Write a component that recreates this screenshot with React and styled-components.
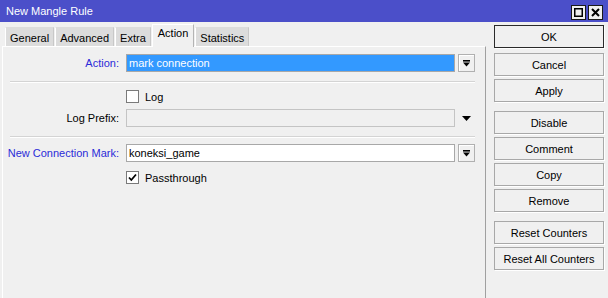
import styled, { createGlobalStyle } from 'styled-components';

const GlobalStyle = createGlobalStyle`
  html, body {
    margin: 0;
    padding: 0;
    background: #f0f0f0;
  }
  * {
    box-sizing: border-box;
  }
`;

const Window = styled.div`
  width: 608px;
  height: 298px;
  display: flex;
  flex-direction: column;
  background: #f0f0f0;
  font-family: 'Liberation Sans', Arial, sans-serif;
  font-size: 11px;
  color: #000;
  overflow: hidden;
`;

const TitleBar = styled.div`
  height: 22px;
  flex-shrink: 0;
  display: flex;
  align-items: center;
  justify-content: space-between;
  padding: 0 5px 0 6px;
  background: #4b4fc9;
  color: #fff;
  font-size: 11px;
`;

const TitleButtons = styled.div`
  display: flex;
  gap: 2px;
  margin-top: 2px;
`;

const TitleButton = styled.div`
  width: 15px;
  height: 15px;
  background: #f0f0f0;
  border: 1px solid #1a1a1a;
  display: flex;
  align-items: center;
  justify-content: center;
`;

const Body = styled.div`
  flex: 1;
  display: flex;
`;

const LeftSide = styled.div`
  width: 486px;
  display: flex;
  flex-direction: column;
  padding-left: 2px;
`;

const TabStrip = styled.div`
  height: 24px;
  display: flex;
  align-items: flex-end;
  padding-left: 3px;
`;

const Tab = styled.div`
  height: ${({ active }) => (active ? '23px' : '19px')};
  margin-bottom: ${({ active }) => (active ? '-1px' : '0')};
  padding: ${({ active }) => (active ? '2px 5px 0' : '1px 4px 0')};
  display: flex;
  align-items: ${({ active }) => (active ? 'flex-start' : 'center')};
  background: ${({ active }) => (active ? '#f0f0f0' : '#dcdcdc')};
  border-top: 1px solid ${({ active }) => (active ? '#ffffff' : '#dcdcdc')};
  border-left: 1px solid #ffffff;
  border-right: 1px solid ${({ active }) => (active ? '#b4b4b4' : '#c8c8c8')};
  margin-right: 1px;
  position: relative;
  z-index: ${({ active }) => (active ? 1 : 0)};
`;

const Panel = styled.div`
  flex: 1;
  border-top: 1px solid #ffffff;
  border-left: 1px solid #ffffff;
  border-right: 1px solid #a0a0a0;
  padding: 7px 10px 0 0;
  display: flex;
  flex-direction: column;
`;

const Row = styled.div`
  display: flex;
  align-items: center;
  height: ${({ h }) => h || 18}px;
  margin-top: ${({ mt }) => mt || 0}px;
`;

const Label = styled.div`
  width: 116px;
  flex-shrink: 0;
  text-align: right;
  margin-right: 7px;
  color: ${({ accent }) => (accent ? '#2b2bd8' : '#000')};
`;

const Field = styled.div`
  width: 329px;
  height: 18px;
  display: flex;
  align-items: center;
  padding-left: 2px;
  border: 1px solid ${({ disabled }) => (disabled ? '#c4c4c4' : '#a8a8a8')};
  background: ${({ selected, disabled }) =>
    selected ? '#3399ff' : disabled ? '#f0f0f0' : '#ffffff'};
  color: ${({ selected }) => (selected ? '#fff' : '#000')};
`;

const DropButton = styled.div`
  width: 17px;
  height: 18px;
  margin-left: 3px;
  border: 1px solid #b0b0b0;
  background: #f0f0f0;
  box-shadow: inset 1px 1px 0 #fff;
  display: flex;
  align-items: center;
  justify-content: center;
`;

const PlainArrow = styled.div`
  width: 17px;
  margin-left: 3px;
  display: flex;
  justify-content: center;
`;

const Separator = styled.div`
  height: 2px;
  margin: ${({ mt }) => mt}px 0 0 7px;
  border-top: 1px solid #d4d4d4;
  border-bottom: 1px solid #ffffff;
`;

const CheckRow = styled.label`
  display: flex;
  align-items: center;
  height: 13px;
  margin-left: 123px;
  margin-top: ${({ mt }) => mt}px;
  gap: 6px;
`;

const Box = styled.div`
  width: 13px;
  height: 13px;
  background: #fff;
  border: 1px solid #7a7a7a;
  display: flex;
  align-items: center;
  justify-content: center;
`;

const RightSide = styled.div`
  width: 110px;
  margin-left: 8px;
  padding-top: 3px;
  display: flex;
  flex-direction: column;
`;

const Button = styled.div`
  height: 23px;
  display: flex;
  align-items: center;
  justify-content: center;
  margin-top: ${({ mt }) => mt ?? 3}px;
  background: #f0f0f0;
  border: 1px solid ${({ primary }) => (primary ? '#2a2a2a' : '#a8a8a8')};
  box-shadow: 1px 1px 0 #fff;
`;

const DropIcon = () => (
  <svg width="9" height="9" viewBox="0 0 9 9">
    <rect x="1" y="1" width="7" height="1.6" fill="#000" />
    <polygon points="1,3.5 8,3.5 4.5,7.5" fill="#000" />
  </svg>
);

const Check = () => (
  <svg width="9" height="9" viewBox="0 0 9 9">
    <polyline points="1,4.5 3.3,7 8,1.5" fill="none" stroke="#000" strokeWidth="1.8" />
  </svg>
);

const tabs = ['General', 'Advanced', 'Extra', 'Action', 'Statistics'];

const buttons = [
  { label: 'OK', primary: true, mt: 0 },
  { label: 'Cancel', mt: 5 },
  { label: 'Apply' },
  { label: 'Disable', mt: 9 },
  { label: 'Comment' },
  { label: 'Copy' },
  { label: 'Remove' },
  { label: 'Reset Counters', mt: 9 },
  { label: 'Reset All Counters' },
];

const App = () => {
  return (
    <Window>
      <GlobalStyle />
      <TitleBar>
        <span>New Mangle Rule</span>
        <TitleButtons>
          <TitleButton>
            <svg width="9" height="9" viewBox="0 0 9 9">
              <rect x="0.75" y="0.75" width="7.5" height="7.5" fill="none" stroke="#000" strokeWidth="1.5" />
            </svg>
          </TitleButton>
          <TitleButton>
            <svg width="9" height="9" viewBox="0 0 9 9">
              <path d="M1 1 L8 8 M8 1 L1 8" stroke="#000" strokeWidth="2" />
            </svg>
          </TitleButton>
        </TitleButtons>
      </TitleBar>
      <Body>
        <LeftSide>
          <TabStrip>
            {tabs.map((t) => (
              <Tab key={t} active={t === 'Action'}>
                {t}
              </Tab>
            ))}
          </TabStrip>
          <Panel>
            <Row>
              <Label accent>Action:</Label>
              <Field selected>mark connection</Field>
              <DropButton>
                <DropIcon />
              </DropButton>
            </Row>
            <Separator mt={9} />
            <CheckRow mt={7}>
              <Box />
              <span>Log</span>
            </CheckRow>
            <Row mt={6}>
              <Label>Log Prefix:</Label>
              <Field disabled />
              <PlainArrow>
                <svg width="9" height="5" viewBox="0 0 9 5">
                  <polygon points="0,0 9,0 4.5,5" fill="#000" />
                </svg>
              </PlainArrow>
            </Row>
            <Separator mt={9} />
            <Row mt={6}>
              <Label accent>New Connection Mark:</Label>
              <Field>koneksi_game</Field>
              <DropButton>
                <DropIcon />
              </DropButton>
            </Row>
            <CheckRow mt={9}>
              <Box>
                <Check />
              </Box>
              <span>Passthrough</span>
            </CheckRow>
          </Panel>
        </LeftSide>
        <RightSide>
          {buttons.map((b) => (
            <Button key={b.label} primary={b.primary} mt={b.mt}>
              {b.label}
            </Button>
          ))}
        </RightSide>
      </Body>
    </Window>
  );
};

export default App;
